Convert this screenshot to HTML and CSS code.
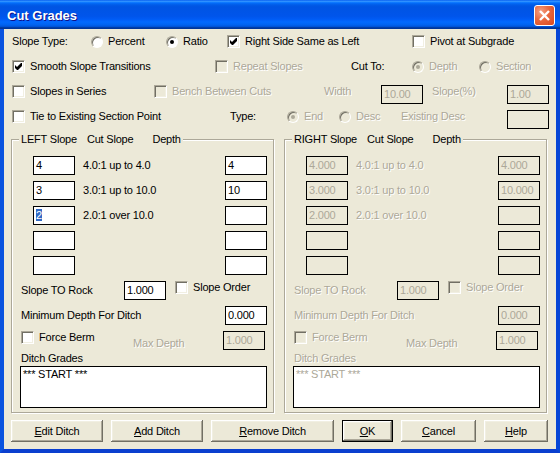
FILE: index.html
```html
<!DOCTYPE html>
<html lang="en">
<head>
    <meta charset="UTF-8">
    <meta name="viewport" content="width=device-width, initial-scale=1.0">
    <title>Cut Grades</title>
    <link rel="stylesheet" href="styles.css">
</head>
<body>
    <div class="window">
        <div class="titlebar">
            <span class="title">Cut Grades</span>
            <span class="close-btn">
                <svg width="21" height="21" viewBox="0 0 21 21">
                    <line x1="6" y1="6" x2="15" y2="15" stroke="#fff" stroke-width="2.4"/>
                    <line x1="15" y1="6" x2="6" y2="15" stroke="#fff" stroke-width="2.4"/>
                </svg>
            </span>
        </div>

        <div class="client">
            <div class="opts">
                <div class="row row1">
                    <span>Slope Type:</span>
                    <span class="opt"><i class="radio"></i>Percent</span>
                    <span class="opt"><i class="radio on"></i>Ratio</span>
                    <span class="opt"><i class="check"><svg class="tick" width="7" height="7" viewBox="0 0 7 7"><polygon points="0,2 2,4 6,0 7,0 7,3 3,7 2,7 0,5"/></svg></i>Right Side Same as Left</span>
                    <span class="opt"><i class="check"></i>Pivot at Subgrade</span>
                </div>
                <div class="row row2">
                    <span class="opt"><i class="check"><svg class="tick" width="7" height="7" viewBox="0 0 7 7"><polygon points="0,2 2,4 6,0 7,0 7,3 3,7 2,7 0,5"/></svg></i>Smooth Slope Transitions</span>
                    <span class="opt off"><i class="check"></i>Repeat Slopes</span>
                    <span>Cut To:</span>
                    <span class="opt off"><i class="radio on"></i>Depth</span>
                    <span class="opt off"><i class="radio"></i>Section</span>
                </div>
                <div class="row row3">
                    <span class="opt"><i class="check"></i>Slopes in Series</span>
                    <span class="opt off"><i class="check"></i>Bench Between Cuts</span>
                    <span class="off">Width</span>
                    <span class="field off">10.00</span>
                    <span class="off">Slope(%)</span>
                    <span class="field off">1.00</span>
                </div>
                <div class="row row4">
                    <span class="opt"><i class="check"></i>Tie to Existing Section Point</span>
                    <span>Type:</span>
                    <span class="opt off"><i class="radio on"></i>End</span>
                    <span class="opt off"><i class="radio"></i>Desc</span>
                    <span class="off">Existing Desc</span>
                    <span class="field off"></span>
                </div>
            </div>

            <div class="groups">
                <div class="group">
                    <div class="group-title">LEFT Slope<span class="t1">Cut Slope</span><span class="t2">Depth</span></div>
                    <div class="slope-row"><span class="field">4</span><span class="desc">4.0:1 up to 4.0</span><span class="field">4</span></div>
                    <div class="slope-row"><span class="field">3</span><span class="desc">3.0:1 up to 10.0</span><span class="field">10</span></div>
                    <div class="slope-row"><span class="field"><span class="sel">2</span></span><span class="desc">2.0:1 over 10.0</span><span class="field"></span></div>
                    <div class="slope-row"><span class="field"></span><span class="desc"></span><span class="field"></span></div>
                    <div class="slope-row"><span class="field"></span><span class="desc"></span><span class="field"></span></div>
                    <div class="rock-row">
                        <span class="rock-label">Slope TO Rock</span>
                        <span class="field">1.000</span>
                        <span class="opt order"><i class="check"></i>Slope Order</span>
                    </div>
                    <div class="ditch-row">
                        <span>Minimum Depth For Ditch</span>
                        <span class="field">0.000</span>
                    </div>
                    <div class="berm-row">
                        <span class="opt berm"><i class="check"></i>Force Berm</span>
                        <span class="off max">Max Depth</span>
                        <span class="field off">1.000</span>
                    </div>
                    <div class="list-label">Ditch Grades</div>
                    <div class="list">*** START ***</div>
                </div>

                <div class="group off">
                    <div class="group-title">RIGHT Slope<span class="t1">Cut Slope</span><span class="t2">Depth</span></div>
                    <div class="slope-row"><span class="field">4.000</span><span class="desc">4.0:1 up to 4.0</span><span class="field">4.000</span></div>
                    <div class="slope-row"><span class="field">3.000</span><span class="desc">3.0:1 up to 10.0</span><span class="field">10.000</span></div>
                    <div class="slope-row"><span class="field">2.000</span><span class="desc">2.0:1 over 10.0</span><span class="field"></span></div>
                    <div class="slope-row"><span class="field"></span><span class="desc"></span><span class="field"></span></div>
                    <div class="slope-row"><span class="field"></span><span class="desc"></span><span class="field"></span></div>
                    <div class="rock-row">
                        <span class="rock-label">Slope TO Rock</span>
                        <span class="field">1.000</span>
                        <span class="opt order"><i class="check"></i>Slope Order</span>
                    </div>
                    <div class="ditch-row">
                        <span>Minimum Depth For Ditch</span>
                        <span class="field">0.000</span>
                    </div>
                    <div class="berm-row">
                        <span class="opt berm"><i class="check"></i>Force Berm</span>
                        <span class="max">Max Depth</span>
                        <span class="field">1.000</span>
                    </div>
                    <div class="list-label">Ditch Grades</div>
                    <div class="list">*** START ***</div>
                </div>
            </div>

            <div class="buttons">
                <span class="btn b-edit"><u>E</u>dit Ditch</span>
                <span class="btn b-add"><u>A</u>dd Ditch</span>
                <span class="btn b-remove"><u>R</u>emove Ditch</span>
                <span class="btn b-ok default"><u>O</u>K</span>
                <span class="btn b-cancel"><u>C</u>ancel</span>
                <span class="btn b-help"><u>H</u>elp</span>
            </div>
        </div>
    </div>
</body>
</html>
```

FILE: styles.css
```css
body {
    margin: 0;
    padding: 0;
    font-family: "Liberation Sans", Arial, sans-serif;
    font-size: 11px;
    line-height: 13px;
    letter-spacing: -0.2px;
    color: #000;
    background: #ECE9D8;
}

.window {
    width: 560px;
    height: 453px;
    overflow: hidden;
}

/* title bar */
.titlebar {
    height: 29px;
    box-sizing: border-box;
    display: flex;
    align-items: center;
    justify-content: space-between;
    padding: 0 5px 0 7px;
    background: linear-gradient(to bottom, #0058ee 0%, #3593ff 4%, #288eff 6%, #127dff 8%, #036ffc 10%, #0262ee 14%, #0057e5 20%, #0054e3 24%, #0055eb 56%, #005bf5 66%, #026afe 76%, #0062ef 86%, #0052d6 92%, #0040ab 94%, #003092 100%);
}

.title {
    color: #fff;
    font-weight: bold;
    font-size: 13px;
    letter-spacing: 0;
    text-shadow: 1px 1px #0f1089;
    margin-top: 2px;
}

.close-btn {
    width: 21px;
    height: 21px;
    box-sizing: border-box;
    margin-top: 2px;
    border: 1px solid #fff;
    border-radius: 3px;
    background: radial-gradient(circle at 30% 30%, #f6a184 0%, #e8683f 45%, #d9471c 100%);
    display: flex;
    align-items: center;
    justify-content: center;
}

.close-btn svg {
    margin: -1px;
}

/* dialog body */
.client {
    height: 424px;
    box-sizing: border-box;
    background: #ECE9D8;
    border: 4px solid #0553E3;
    border-top: 0;
    border-left-color: #0A53DF;
    border-right-color: #0646D6;
    border-bottom-color: #0A3FCF;
}

.opts {
    padding-left: 8px;
}

.row {
    display: grid;
    height: 25px;
    align-items: center;
    white-space: nowrap;
}

.row1 { grid-template-columns: 79px 75px 61px 185px 1fr; }
.row2 { grid-template-columns: 203px 136px 61px 67px 1fr; }
.row3 { grid-template-columns: 142px 170px 57px 51px 75px 42px; }
.row4 { grid-template-columns: 218px 57px 52px 62px 106px 42px; }

.row .field {
    align-self: end;
}

.opt {
    display: flex;
    align-items: center;
    gap: 5px;
    white-space: nowrap;
}

.off {
    color: #ACA899;
    text-shadow: 1px 1px #fff;
}

/* classic check box */
.check {
    width: 13px;
    height: 13px;
    box-sizing: border-box;
    flex: none;
    border: 1px solid;
    border-color: #ACA899 #fff #fff #ACA899;
    box-shadow: inset 1px 1px #716F64, inset -1px -1px #F1EFE2;
    background: #fff;
    display: flex;
    align-items: center;
    justify-content: center;
}

.tick {
    display: block;
    fill: #000;
}

/* classic radio button */
.radio {
    width: 12px;
    height: 12px;
    box-sizing: border-box;
    flex: none;
    border-radius: 50%;
    border: 1px solid;
    border-color: #ACA899 #fff #fff #ACA899;
    box-shadow: inset 1px 1px #716F64;
    background: #fff;
    display: flex;
    align-items: center;
    justify-content: center;
}

.radio.on::after {
    content: "";
    width: 4px;
    height: 4px;
    border-radius: 50%;
    background: #000;
}

.off .check,
.off .radio {
    background: #ECE9D8;
}

.off .radio.on::after {
    background: #ACA899;
}

/* edit boxes */
.field {
    width: 42px;
    height: 19px;
    box-sizing: border-box;
    flex: none;
    border: 1px solid #000;
    background: #fff;
    padding: 0 2px;
    line-height: 17px;
    white-space: nowrap;
    overflow: hidden;
    text-shadow: none;
}

.field.off,
.group.off .field {
    background: #ECE9D8;
    color: #ACA899;
    text-shadow: none;
}

.sel {
    background: #316AC5;
    color: #fff;
}

/* group boxes */
.groups {
    display: flex;
    gap: 10px;
    padding-left: 7px;
    margin-top: 10px;
}

.group {
    width: 263px;
    box-sizing: border-box;
    border: 1px solid #ACA899;
    box-shadow: inset 1px 1px #fff, 1px 1px #fff;
    padding: 0 6px 4px 9px;
}

.group-title {
    width: max-content;
    margin: -7px 0 0 -2px;
    padding: 0 2px;
    background: #ECE9D8;
    color: #000;
    text-shadow: none;
}

.group-title .t1 { margin-left: 10px; }
.group-title .t2 { margin-left: 19px; }

.slope-row {
    display: flex;
    align-items: center;
    height: 19px;
    margin-top: 6px;
    padding-left: 12px;
}

.group-title + .slope-row {
    margin-top: 10px;
}

.desc {
    flex: 1;
    margin-left: 8px;
    white-space: nowrap;
}

.rock-row,
.ditch-row,
.berm-row {
    display: flex;
    align-items: center;
    height: 19px;
    margin-top: 6px;
    white-space: nowrap;
}

.rock-label {
    width: 103px;
    flex: none;
}

.order {
    align-self: flex-start;
    margin-left: 9px;
}

.ditch-row .field {
    margin-left: auto;
}

.berm {
    width: 112px;
    flex: none;
    align-self: flex-start;
}

.max {
    flex: 1;
    margin-top: 6px;
}

.berm-row .field {
    margin-right: 2px;
}

.list-label {
    margin-top: 2px;
}

.list {
    height: 42px;
    box-sizing: border-box;
    margin: 1px 0 0 -1px;
    border: 1px solid #000;
    background: #fff;
    padding: 1px 2px;
    white-space: nowrap;
}

.group.off .group-title ~ * {
    color: #ACA899;
}

.group.off .desc,
.group.off .rock-label,
.group.off .order,
.group.off .ditch-row > span:first-child,
.group.off .berm,
.group.off .max,
.group.off .list-label {
    text-shadow: 1px 1px #fff;
}

.group.off .check {
    background: #ECE9D8;
}

/* push buttons */
.buttons {
    display: flex;
    gap: 8px;
    padding-left: 7px;
    margin-top: 7px;
}

.btn {
    height: 22px;
    box-sizing: border-box;
    background: #ECE9D8;
    box-shadow: inset -1px -1px #716F64, inset 1px 1px #fff, inset -2px -2px #ACA899, inset 2px 2px #F1EFE2;
    display: flex;
    align-items: center;
    justify-content: center;
}

.btn.default {
    border: 1px solid #000;
}

.b-edit { width: 92px; }
.b-add { width: 92px; }
.b-remove { width: 123px; }
.b-ok { width: 51px; }
.b-cancel { width: 75px; }
.b-help { width: 64px; }
```
